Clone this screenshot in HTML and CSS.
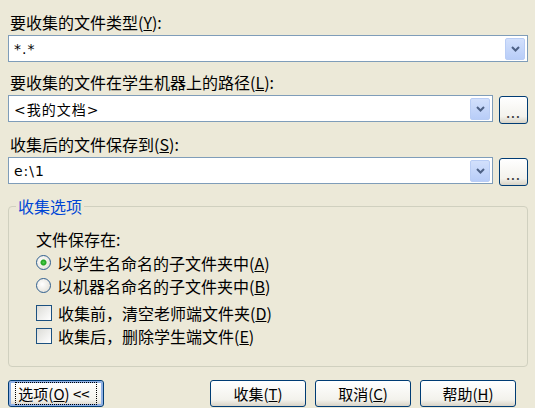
FILE: index.html
```html
<!DOCTYPE html>
<html lang="zh-CN">
<head>
  <meta charset="UTF-8">
  <title>收集文件</title>
  <link rel="stylesheet" href="styles.css">
</head>
<body>
  <div class="dialog">
    <div class="field">
      <div class="field-label">要收集的文件类型(<u>Y</u>):</div>
      <div class="field-row">
        <div class="combo">
          <span class="combo-text">*.*</span>
          <span class="combo-btn"><svg width="9" height="6" viewBox="0 0 9 6"><polyline points="1,1 4.5,4.5 8,1" fill="none" stroke="#4d6185" stroke-width="2"/></svg></span>
        </div>
      </div>
    </div>

    <div class="field">
      <div class="field-label">要收集的文件在学生机器上的路径(<u>L</u>):</div>
      <div class="field-row">
        <div class="combo">
          <span class="combo-text">&lt;我的文档&gt;</span>
          <span class="combo-btn"><svg width="9" height="6" viewBox="0 0 9 6"><polyline points="1,1 4.5,4.5 8,1" fill="none" stroke="#4d6185" stroke-width="2"/></svg></span>
        </div>
        <button class="browse">...</button>
      </div>
    </div>

    <div class="field">
      <div class="field-label">收集后的文件保存到(<u>S</u>):</div>
      <div class="field-row">
        <div class="combo">
          <span class="combo-text">e:\1</span>
          <span class="combo-btn"><svg width="9" height="6" viewBox="0 0 9 6"><polyline points="1,1 4.5,4.5 8,1" fill="none" stroke="#4d6185" stroke-width="2"/></svg></span>
        </div>
        <button class="browse">...</button>
      </div>
    </div>

    <fieldset class="group">
      <legend>收集选项</legend>
      <div class="group-title">文件保存在:</div>
      <label class="opt"><input type="radio" name="save" checked><span>以学生名命名的子文件夹中(<u>A</u>)</span></label>
      <label class="opt"><input type="radio" name="save"><span>以机器名命名的子文件夹中(<u>B</u>)</span></label>
      <label class="opt opt-check"><input type="checkbox"><span>收集前，清空老师端文件夹(<u>D</u>)</span></label>
      <label class="opt"><input type="checkbox"><span>收集后，删除学生端文件(<u>E</u>)</span></label>
    </fieldset>

    <div class="footer">
      <button class="btn btn-default"><span class="focus">选项(<u>O</u>) &lt;&lt;</span></button>
      <div class="footer-right">
        <button class="btn">收集(<u>T</u>)</button>
        <button class="btn">取消(<u>C</u>)</button>
        <button class="btn">帮助(<u>H</u>)</button>
      </div>
    </div>
  </div>
</body>
</html>
```

FILE: styles.css
```css
body {
  margin: 0;
  background-color: #ece9d8;
  font-family: 'Noto Sans CJK SC', 'Noto Sans', sans-serif;
  font-size: 16px;
  color: #000;
  overflow: hidden;
}

.dialog {
  padding: 12px 7px 0 8px;
}

.field {
  display: flex;
  flex-direction: column;
  gap: 2px;
  margin-bottom: 10px;
}

.field-label {
  line-height: 21px;
  padding-left: 2px;
}

.field-row {
  display: flex;
  align-items: flex-start;
  gap: 6px;
}

.combo {
  flex: 1;
  height: 27px;
  box-sizing: border-box;
  border: 1px solid #7f9db9;
  background-color: #fff;
  display: flex;
  align-items: center;
  padding: 2px;
}

.combo-text {
  flex: 1;
  padding-left: 3px;
  font-family: 'DejaVu Sans', 'Noto Sans CJK SC', sans-serif;
  font-size: 14px;
  letter-spacing: 1px;
}

.combo-btn {
  width: 20px;
  height: 22px;
  box-sizing: border-box;
  border: 1px solid #b9cdf5;
  border-radius: 2px;
  background: linear-gradient(#d2e0fc, #b8cdf8);
  display: flex;
  align-items: center;
  justify-content: center;
}

.browse {
  width: 29px;
  height: 28px;
  margin-top: 1px;
  border: 1px solid #003c74;
  border-radius: 3px;
  background: linear-gradient(#ffffff, #f3f2ec 75%, #d8d3c6);
  font-family: 'DejaVu Sans', sans-serif;
  font-size: 10px;
  font-weight: bold;
  color: #444;
  padding: 9px 0 0;
  letter-spacing: 1px;
}

.group {
  margin: 8px 0 0;
  padding: 11px 0 19px 27px;
  border: 1px solid #d0d0bf;
  border-radius: 4px;
}

.group legend {
  color: #0046d5;
  padding: 0 2px;
  margin-left: -20px;
  line-height: 21px;
}

.group-title {
  line-height: 22px;
  margin-bottom: 1px;
}

.opt {
  display: flex;
  align-items: center;
  gap: 6px;
  height: 23px;
}

.opt-check {
  margin-top: 4px;
}

.opt input {
  appearance: none;
  margin: 0;
  width: 15px;
  height: 15px;
  box-sizing: border-box;
  border: 1px solid #1c5180;
  background: linear-gradient(135deg, #dcdcd7, #ffffff);
}

.opt input[type="radio"] {
  border-radius: 50%;
  border-color: #2f5f8f;
  background: radial-gradient(circle at 40% 40%, #ffffff, #dedbd0);
}

.opt input[type="radio"]:checked {
  background: radial-gradient(circle, #4cd24c 0, #21a121 2.5px, transparent 3.5px),
    radial-gradient(circle at 40% 40%, #ffffff, #dedbd0);
}

.opt input[type="checkbox"] {
  width: 16px;
  height: 16px;
}

.footer {
  display: flex;
  justify-content: space-between;
  margin-top: 13px;
}

.footer-right {
  display: flex;
  gap: 9px;
  margin-right: 12px;
}

.btn {
  width: 96px;
  height: 27px;
  border: 1px solid #003c74;
  border-radius: 3px;
  background: linear-gradient(#ffffff, #f3f2ec 75%, #d8d3c6);
  font-family: 'Noto Sans CJK SC', sans-serif;
  font-size: 15px;
  color: #000;
  padding: 0;
}

.btn-default {
  box-shadow: inset 0 0 0 2px #8fb0e5;
}

.focus {
  border: 1px dotted #000;
  padding: 0 6px 0 2px;
  line-height: 19px;
}
```
